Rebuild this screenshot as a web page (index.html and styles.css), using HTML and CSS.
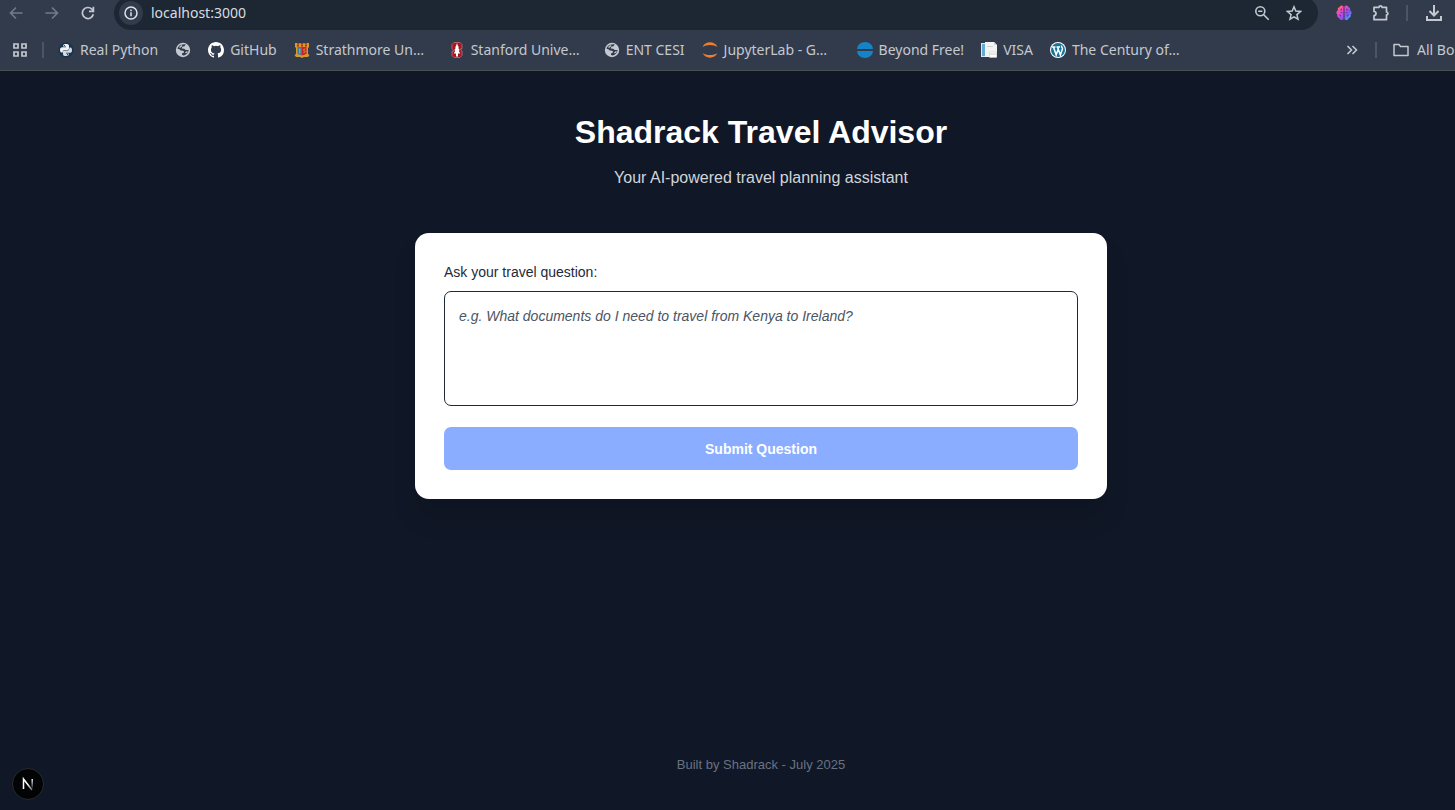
FILE: index.html
```html
<!DOCTYPE html>
<html lang="en">
<head>
<meta charset="utf-8">
<meta name="viewport" content="width=device-width, initial-scale=1">
<title>Shadrack Travel Advisor</title>
<link rel="stylesheet" href="styles.css">
</head>
<body>
<header class="browser">
  <div class="toolbar">
    <div class="nav-buttons">
      <button class="icon-button dim" aria-label="Back"><svg width="14" height="14" viewBox="0 0 14 14" fill="none" stroke="currentColor" stroke-width="1.6"><path d="M13.500 7H1.500M7 1.500 1.500 7 7 12.500"/></svg></button>
      <button class="icon-button dim" aria-label="Forward"><svg width="14" height="14" viewBox="0 0 14 14" fill="none" stroke="currentColor" stroke-width="1.6"><path d="M.5 7h12M7 1.500 12.500 7 7 12.500"/></svg></button>
      <button class="icon-button" aria-label="Reload"><svg width="14" height="14" viewBox="0 0 14 14" fill="none" stroke="currentColor" stroke-width="1.700"><path d="M12.300 8.200A5.500 5.500 0 1 1 10.900 3.200L12.300 4.700"/><path d="M12.400.8v4.500H8"/></svg></button>
    </div>
    <div class="address">
      <button class="site-info" aria-label="View site information"><svg width="14" height="14" viewBox="0 0 14 14" fill="none" stroke="currentColor" stroke-width="1.5"><circle cx="7" cy="7" r="6"/><path d="M7 6.300v4M7 3.600v1.600"/></svg></button>
      <input class="url" type="text" value="localhost:3000" aria-label="Address">
      <button class="icon-button wide" aria-label="Zoom"><svg width="16" height="16" viewBox="0 0 16 16" fill="none" stroke="currentColor" stroke-width="1.6"><circle cx="6.300" cy="6.300" r="4.500"/><path d="m9.700 9.700 5 5M4.200 6.300h4.200"/></svg></button>
      <button class="icon-button wide" aria-label="Bookmark this page"><svg width="16" height="16" viewBox="0 0 16 16" fill="none" stroke="currentColor" stroke-width="1.5"><path d="m8 1.800 1.800 4.300 4.700.4-3.600 3.100 1.100 4.600L8 11.800l-4 2.400 1.100-4.600L1.500 6.500l4.700-.4z"/></svg></button>
    </div>
    <div class="actions">
      <button class="icon-button" aria-label="Brain extension"><svg width="16" height="16" viewBox="0 0 16 16"><defs><linearGradient id="brain" x2="1" y2="1"><stop stop-color="#ff8a24"/><stop offset=".35" stop-color="#ef43d4"/><stop offset=".65" stop-color="#8353f5"/><stop offset="1" stop-color="#20d8ef"/></linearGradient></defs><path fill="url(#brain)" d="M7.500 1.500C6-.2 3.800.8 3.500 2.300 1.800 2.500 1.400 4.200 2 5.300.2 6.200-.1 8.600 1.300 9.800c-.4 2 .7 3.200 2.100 3.400.5 2 3 2.500 4.100 1.100zM8.500 1.500c1.500-1.700 3.700-.7 4 .8 1.700.2 2.100 1.900 1.500 3 1.800.9 2.100 3.300.7 4.500.4 2-.7 3.200-2.100 3.400-.5 2-3 2.500-4.100 1.100z"/><path d="M5.500 3.500v1.500H3.800M6.500 7.500h-2M3 10h1.500v1.500M10.500 3.500v1.500h1.700M9.500 7.500h2m1.500 2.500h-1.500v1.500" fill="none" stroke="#4a3b70" stroke-width=".7"/></svg></button>
      <button class="icon-button" aria-label="Extensions"><svg width="18" height="18" viewBox="0 0 18 18" fill="none" stroke="currentColor" stroke-width="1.700" stroke-linejoin="round"><path d="M3 3.300H8A1.500 1.500 0 0 1 11 3.300h4.500v4.700a1.400 1.400 0 0 1 0 2.800v4.900H3v-4.200a2 2 0 0 0 0-4z"/></svg></button>
      <span class="divider"></span>
      <button class="icon-button" aria-label="Downloads"><svg width="18" height="18" viewBox="0 0 18 18" fill="none" stroke="currentColor" stroke-width="2"><path d="M9 1v10M4.500 7 9 11.500 13.500 7M2 12v4h14v-4"/></svg></button>
    </div>
  </div>
  <nav class="bookmarks" aria-label="Bookmarks">
    <button class="icon-button apps" aria-label="Apps"><svg width="14" height="14" viewBox="0 0 14 14" fill="none" stroke="currentColor" stroke-width="1.700"><path d="M1 1h4v4H1zM9 1h4v4H9zM1 9h4v4H1zM9 9h4v4H9z"/></svg></button>
    <span class="divider first-divider"></span>
    <a class="bookmark" href="#"><svg width="16" height="16" viewBox="0 0 16 16"><circle cx="8" cy="8" r="7.500" fill="#16354d"/><path fill="#eef3f7" d="M5 4.200C5 2.500 6 2 8 2s3 .5 3 2.100v2.500C11 7.700 10.300 8 9.500 8h-3C5.200 8 4.700 9 4.700 10.500H3.600C2.300 10.500 2 9 2 7.800 2 6 2.800 5.200 4.200 5.200H8v-.6H5z"/><path fill="#d6dce2" d="M11 11.800c0 1.700-1 2.200-3 2.200s-3-.5-3-2.100V9.700c0-.8.6-1.300 1.500-1.300h3c1.400 0 1.900-1 1.900-2.900h1c1.300 0 1.600 1.500 1.600 2.700 0 1.800-.8 2.600-2.200 2.600H8v.6h3z"/><circle cx="6.400" cy="3.500" r=".6" fill="#16354d"/><circle cx="9.600" cy="12.400" r=".6" fill="#16354d"/></svg><span>Real Python</span></a>
    <a class="bookmark" href="#" aria-label="Website"><svg width="16" height="16" viewBox="0 0 16 16"><circle cx="8" cy="8" r="7.200" fill="#c5c8ce"/><path d="M10.800 2.300 9.500 4.200 7.300 4.700 6.700 6.500 9.200 6.800 10.700 8H13.600C13.400 10.800 11.200 13.200 8.200 13.500L7 12.800V11.500L8.900 10.600 9 9.200 7.700 8.700 5 8.300 4.700 7.300 2.500 6.700C3 4.300 5 2.600 7.400 2.400z" fill="#313b4c"/><path d="M4.500 5.500 7 3.500M10.500 11l2-1.500" stroke="#c5c8ce" stroke-width="1.500"/></svg></a>
    <a class="bookmark" href="#"><svg width="16" height="16" viewBox="0 0 16 16"><path fill="#fff" d="M8 0C3.580 0 0 3.580 0 8c0 3.540 2.290 6.530 5.470 7.590.4.070.55-.17.55-.38v-1.490c-2.010.37-2.530-.49-2.690-.94-.09-.23-.48-.94-.82-1.130-.28-.15-.68-.52-.01-.53.630-.01 1.080.58 1.230.82.720 1.210 1.870.87 2.330.66.070-.52.280-.87.510-1.070-1.780-.2-3.640-.89-3.640-3.950 0-.87.310-1.590.82-2.150-.08-.2-.36-1.020.08-2.120 0 0 .67-.21 2.200.82a7.600 7.600 0 0 1 4 0c1.530-1.040 2.200-.82 2.200-.82.440 1.100.160 1.920.080 2.120.510.560.820 1.270.820 2.150 0 3.070-1.870 3.750-3.650 3.950.290.250.540.730.540 1.480v2.200c0 .21.150.46.550.38A8 8 0 0 0 16 8c0-4.420-3.580-8-8-8z"/></svg><span>GitHub</span></a>
    <a class="bookmark" href="#"><svg width="16" height="16" viewBox="0 0 16 16"><path fill="#d69a2c" d="M1 1h2l1 1 2-1 2 1 2-1 2 1 1-1h2v4l-1 1v6l1.500 1-1.500 2h-4l-2 1-2-1H2L.5 13 2 12V6L1 5z"/><path fill="#c8202c" d="M3 2.500h2v2H3zm4 0h2v2H7zm4 0h2v2h-2zM8 5h4.500v7L8 13.500z"/><path fill="#3979a4" d="M3.500 5H8v8.500L3.500 12z"/><path d="M5.800 6.500v5M11 6.500 9.500 8l1.500 1.500L9.500 11" stroke="#dfac38" fill="none"/></svg><span class="long">Strathmore Un…</span></a>
    <a class="bookmark" href="#"><svg width="16" height="16" viewBox="0 0 16 16"><path fill="#a71422" stroke="#cb7b80" stroke-width=".7" d="M5 .5h6L13 2.500v4h-1.200v1.500l1.200 1V13.500L11 15.500H5L3 13.500V9.500h1.200V8L3 6.500v-4z"/><path fill="#fff" d="m8 1 1 3 .8 1-.5 1 1.300 2-.8 1 1.400 2.500H9V14.500H7v-3H4.800L6.200 9l-.8-1 1.300-2-.5-1 .8-1z"/></svg><span class="long">Stanford Unive…</span></a>
    <a class="bookmark" href="#"><svg width="16" height="16" viewBox="0 0 16 16"><circle cx="8" cy="8" r="7.200" fill="#c5c8ce"/><path d="M10.800 2.300 9.500 4.200 7.300 4.700 6.700 6.500 9.200 6.800 10.700 8H13.600C13.400 10.800 11.200 13.200 8.200 13.500L7 12.800V11.500L8.900 10.600 9 9.200 7.700 8.700 5 8.300 4.700 7.300 2.500 6.700C3 4.300 5 2.600 7.400 2.400z" fill="#313b4c"/><path d="M4.500 5.500 7 3.500M10.500 11l2-1.500" stroke="#c5c8ce" stroke-width="1.500"/></svg><span>ENT CESI</span></a>
    <a class="bookmark" href="#"><svg width="16" height="16" viewBox="0 0 16 16" fill="#ef7d32"><path d="M.6 5C3-1.200 13-1.200 15.400 5 11.800 2.200 4.200 2.200.6 5zM.6 11c2.400 6.200 12.400 6.200 14.800 0-3.600 2.800-11.200 2.800-14.800 0z"/></svg><span class="long">JupyterLab - G…</span></a>
    <a class="bookmark" href="#"><svg width="16" height="16" viewBox="0 0 16 16" fill="#1683c6"><path d="M0 7a8 7 0 0 1 16 0zM0 9h16A8 7 0 0 1 0 9z"/></svg><span>Beyond Free!</span></a>
    <a class="bookmark" href="#"><svg width="16" height="16" viewBox="0 0 16 16"><path fill="#d7eaf5" d="M0 1h6v14H0z"/><path fill="#65a9d5" d="M1 2h3v12H1z"/><path fill="#f3f3f3" d="M4 0h9l3 3v12H4z"/><path fill="#d2d2d2" d="M13 0v3h3zM6 4h6v1H6z"/><path fill="#fff" stroke="#c5c5c5" stroke-width=".5" d="M8.500 10h7v5.500h-7z"/><path d="M9 12h6" stroke="#ccc"/></svg><span>VISA</span></a>
    <a class="bookmark" href="#"><svg width="16" height="16" viewBox="0 0 16 16"><circle cx="8" cy="8" r="8" fill="#fff"/><circle cx="8" cy="8" r="7" fill="#16739c"/><path d="M2 5h3.500M6.500 5H10M3.500 5l2.700 8L8.200 7 7.500 5M8.200 7l2.200 6 2-6c.4-1.400-1.200-2-.9-3.500" fill="none" stroke="#fff" stroke-width="1.500"/></svg><span class="long">The Century of…</span></a>
    <div class="bookmarks-end">
      <button class="icon-button" aria-label="More bookmarks"><svg width="12" height="12" viewBox="0 0 12 12" fill="none" stroke="currentColor" stroke-width="1.600"><path d="m1.500 2 4 4-4 4m5-8 4 4-4 4"/></svg></button>
      <span class="divider"></span>
      <a class="bookmark all" href="#"><svg width="16" height="14" viewBox="0 0 16 14" fill="none" stroke="currentColor" stroke-width="1.500" stroke-linejoin="round"><path d="M1 1.500h5l1.500 2H15v9H1z"/></svg><span>All Bo</span></a>
    </div>
  </nav>
</header>
<div class="page">
  <main class="content">
    <h1>Shadrack Travel Advisor</h1>
    <p class="subtitle">Your AI-powered travel planning assistant</p>
    <form class="card">
      <label for="question">Ask your travel question:</label>
      <textarea id="question" placeholder="e.g. What documents do I need to travel from Kenya to Ireland?"></textarea>
      <button class="submit" type="button">Submit Question</button>
    </form>
  </main>
  <footer>Built by Shadrack - July 2025</footer>
</div>
<button class="dev-badge" aria-label="Next.js developer tools"><svg width="16" height="16" viewBox="0 0 16 16" fill="none"><defs><linearGradient id="stem" x2="0" y2="1"><stop stop-color="#fff"/><stop offset="1" stop-color="#fff" stop-opacity=".15"/></linearGradient><linearGradient id="slash" x2="1" y2="1"><stop offset=".5" stop-color="#fff"/><stop offset="1" stop-color="#fff" stop-opacity=".4"/></linearGradient></defs><path d="M3.500 13V3L12 14" stroke="url(#slash)" stroke-width="1.500"/><path d="M11.500 3h1.400v9h-1.400z" fill="url(#stem)"/></svg></button>
</body>
</html>
```
FILE: styles.css
```css
* { box-sizing: border-box; }

body {
  margin: 0;
  min-height: 100vh;
  display: flex;
  flex-direction: column;
  overflow: hidden;
  background: #101726;
  font-family: "Liberation Sans", Arial, sans-serif;
}

button { border: 0; padding: 0; font: inherit; }

.browser {
  background: #313b4c;
  color: #c5c8ce;
  border-bottom: 1px solid #474d55;
  font: 14px/20px "Noto Sans", sans-serif;
  overflow: hidden;
}

.toolbar {
  display: flex;
  height: 34px;
  margin-top: -4px;
}

.nav-buttons { display: flex; width: 114px; padding-left: 6px; gap: 16px; }
.icon-button {
  display: flex;
  align-items: center;
  justify-content: center;
  flex: none;
  width: 20px;
  background: transparent;
  color: inherit;
}
.dim { color: #737b87; }
.wide { width: 32px; }

.address {
  display: flex;
  align-items: center;
  flex: 1;
  min-width: 0;
  padding: 0 8px 0 5px;
  border-radius: 17px;
  background: #1c2733;
}
.address .icon-button { height: 32px; }
.site-info {
  display: grid;
  place-items: center;
  width: 24px;
  height: 24px;
  border-radius: 50%;
  background: #313b4c;
  color: #dfe2e6;
}
.url {
  flex: 1;
  min-width: 0;
  padding: 0 8px;
  border: 0;
  outline: 0;
  background: transparent;
  color: #d9dce0;
  font: inherit;
}

.actions { display: flex; align-items: center; width: 137px; padding-left: 16px; gap: 16px; }
.divider { flex: none; width: 2px; height: 16px; background: #4b5563; }

.bookmarks { display: flex; align-items: center; height: 40px; padding-left: 10px; gap: 17px; }
.apps { margin-right: -5px; }
.first-divider { margin-right: -3px; }
.bookmark {
  display: flex;
  align-items: center;
  gap: 6px;
  flex: none;
  color: inherit;
  text-decoration: none;
  white-space: nowrap;
}
.bookmark svg { flex: none; }
.long { width: 116px; }
.bookmarks-end { display: flex; align-items: center; gap: 13px; margin-left: auto; }
.bookmarks-end .divider { margin-right: 3px; }
.all { gap: 8px; width: 62px; overflow: hidden; }

/* The page viewport extends past the window's right edge. */
.page {
  display: flex;
  flex: 1;
  flex-direction: column;
  width: calc(100% + 67px);
  padding: 40px 0 36px;
}
.content {
  width: 100%;
  max-width: 692px;
  margin: 0 auto;
  text-align: center;
}
h1 { margin: 0; color: #fff; font-size: 32px; line-height: 42px; }
.subtitle { margin: 15px 0 45px; color: #d1d5db; font-size: 16px; line-height: 20px; }
.card {
  display: flex;
  flex-direction: column;
  padding: 29px;
  border-radius: 14px;
  background: #fff;
  box-shadow: 0 20px 24px rgba(0, 0, 0, .1);
  text-align: left;
}
label { margin-bottom: 9px; color: #1e2939; font-size: 14px; line-height: 20px; }
textarea {
  height: 115px;
  margin-bottom: 21px;
  padding: 14px;
  border: 1px solid #1e2939;
  border-radius: 7px;
  background: #fff;
  color: #1e2939;
  font: 14px/20px "Liberation Sans", Arial, sans-serif;
  resize: none;
}
textarea::placeholder { color: #4a5565; font-style: italic; }
.submit {
  height: 43px;
  border-radius: 7px;
  background: #8aadff;
  color: #fff;
  font-size: 14px;
  font-weight: 700;
}
footer { margin-top: auto; color: #6a7282; font-size: 13px; line-height: 18px; text-align: center; }

.dev-badge {
  position: fixed;
  left: 12px;
  bottom: 10px;
  display: grid;
  place-items: center;
  width: 32px;
  height: 32px;
  border: 1px solid #292b2e;
  border-radius: 50%;
  background: #020305;
}
```
